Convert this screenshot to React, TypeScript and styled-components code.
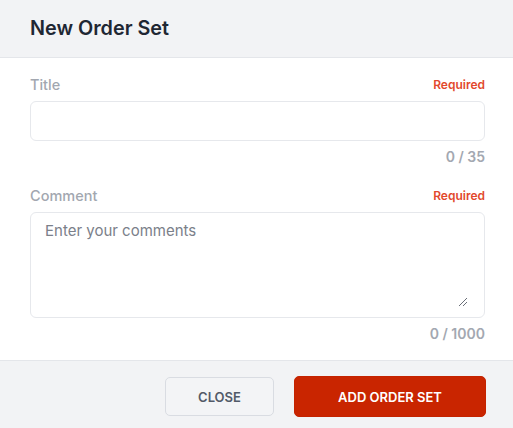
import React from "react";
import styled, { createGlobalStyle } from "styled-components";

const Global = createGlobalStyle`
  html, body { margin: 0; padding: 0; background: #ffffff; }
  body { font-family: Inter, "Noto Sans", sans-serif; -webkit-font-smoothing: antialiased; }
  * { box-sizing: border-box; }
`;

const Dialog = styled.div`
  width: 513px;
  height: 428px;
  display: flex;
  flex-direction: column;
  background: #ffffff;
`;

const Header = styled.header`
  height: 58px;
  flex: none;
  display: flex;
  align-items: center;
  padding: 0 30px 1px;
  background: #f2f3f5;
  border-bottom: 1px solid #e4e6ea;
`;

const Heading = styled.h2`
  margin: 0;
  font-size: 19.8px;
  font-weight: 600;
  color: #1f2733;
`;

const Body = styled.div`
  flex: 1;
  display: flex;
  flex-direction: column;
  padding: 16px 28px 0 30px;
`;

const Field = styled.div<{ $gapBelow?: number }>`
  display: flex;
  flex-direction: column;
  margin-bottom: ${(p) => p.$gapBelow ?? 0}px;
`;

const LabelRow = styled.div`
  display: flex;
  justify-content: space-between;
  align-items: center;
  height: 20px;
  margin-bottom: 7px;
`;

const Label = styled.label`
  font-size: 14.5px;
  font-weight: 500;
  color: #a2a7b0;
`;

const Required = styled.span`
  font-size: 12px;
  font-weight: 600;
  color: #e2482d;
`;

const inputBase = `
  width: 100%;
  border: 1px solid #e6e8ec;
  border-radius: 6px;
  background: #ffffff;
  font-family: Inter, "Noto Sans", sans-serif;
  font-size: 15px;
  color: #1f2733;
  outline: none;
  &::placeholder { color: #7b808a; }
`;

const TextInput = styled.input`
  ${inputBase}
  height: 40px;
  padding: 0 14px;
`;

const AreaWrap = styled.div`
  position: relative;
  height: 106px;
`;

const TextArea = styled.textarea`
  ${inputBase}
  height: 100%;
  padding: 8px 14px;
  resize: none;
  display: block;
  line-height: 20px;
`;

const Grip = styled.svg`
  position: absolute;
  right: 17px;
  bottom: 11px;
  width: 10px;
  height: 10px;
  pointer-events: none;
`;

const Counter = styled.div`
  align-self: flex-end;
  margin-top: 6px;
  font-size: 14px;
  font-weight: 600;
  line-height: 20px;
  color: #a3a8b1;
`;

const Footer = styled.footer`
  height: 68px;
  flex: none;
  display: flex;
  justify-content: flex-end;
  align-items: center;
  gap: 20px;
  padding: 4px 27px 0 0;
  background: #f2f3f5;
  border-top: 1px solid #e4e6ea;
`;

const Button = styled.button<{ $primary?: boolean }>`
  height: ${(p) => (p.$primary ? 41 : 39)}px;
  width: ${(p) => (p.$primary ? 192 : 109)}px;
  border-radius: 5px;
  font-family: Inter, "Noto Sans", sans-serif;
  font-size: 13px;
  font-weight: 600;
  cursor: pointer;
  border: 1px solid ${(p) => (p.$primary ? "#c42300" : "#d9dce2")};
  background: ${(p) => (p.$primary ? "#c92500" : "#f3f4f6")};
  color: ${(p) => (p.$primary ? "#ffffff" : "#525a68")};
`;

export default function App() {
  return (
    <>
      <Global />
      <Dialog>
        <Header>
          <Heading>New Order Set</Heading>
        </Header>
        <Body>
          <Field $gapBelow={18}>
            <LabelRow>
              <Label>Title</Label>
              <Required>Required</Required>
            </LabelRow>
            <TextInput />
            <Counter>0 / 35</Counter>
          </Field>
          <Field>
            <LabelRow>
              <Label>Comment</Label>
              <Required>Required</Required>
            </LabelRow>
            <AreaWrap>
              <TextArea placeholder="Enter your comments" />
              <Grip viewBox="0 0 10 10">
                <path d="M1 9 L9 1 M5 9 L9 5" stroke="#6a6f78" strokeWidth="1" fill="none" />
              </Grip>
            </AreaWrap>
            <Counter>0 / 1000</Counter>
          </Field>
        </Body>
        <Footer>
          <Button>CLOSE</Button>
          <Button $primary>ADD ORDER SET</Button>
        </Footer>
      </Dialog>
    </>
  );
}
